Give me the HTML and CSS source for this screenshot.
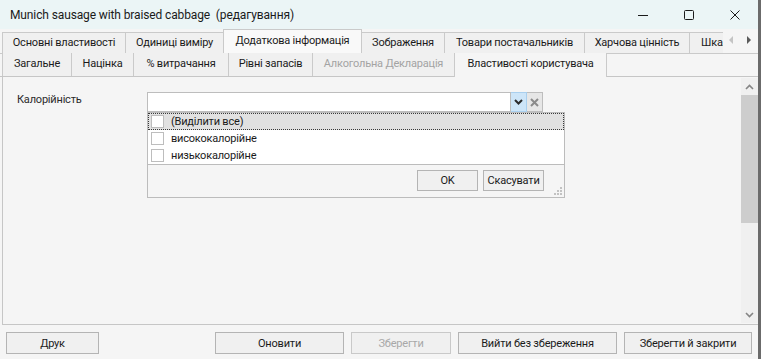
FILE: index.html
```html
<!DOCTYPE html>
<html lang="uk">
<head>
    <meta charset="UTF-8">
    <meta name="viewport" content="width=device-width, initial-scale=1.0">
    <title>Munich sausage with braised cabbage (редагування)</title>
    <link rel="stylesheet" href="styles.css">
</head>
<body>
    <div class="window">
        <div class="titlebar">
            <span class="title">Munich sausage with braised cabbage&nbsp; (редагування)</span>
            <div class="win-controls">
                <span class="ctl">
                    <svg width="10" height="10" viewBox="0 0 10 10"><path d="M0 5.5h10" stroke="#1a1a1a" stroke-width="1"/></svg>
                </span>
                <span class="ctl">
                    <svg width="10" height="10" viewBox="0 0 10 10"><rect x="0.5" y="0.5" width="9" height="9" rx="1" fill="none" stroke="#1a1a1a" stroke-width="1"/></svg>
                </span>
                <span class="ctl">
                    <svg width="10" height="10" viewBox="0 0 10 10"><path d="M0.5 0.5l9 9M9.5 0.5l-9 9" stroke="#1a1a1a" stroke-width="1"/></svg>
                </span>
            </div>
        </div>

        <div class="tabs tabs-main">
            <div class="tab-list">
                <div class="tab t-main">Основні властивості</div>
                <div class="tab t-units">Одиниці виміру</div>
                <div class="tab t-extra active">Додаткова інформація</div>
                <div class="tab t-images">Зображення</div>
                <div class="tab t-suppliers">Товари постачальників</div>
                <div class="tab t-nutrition">Харчова цінність</div>
                <div class="tab t-scale">Шкала</div>
            </div>
            <div class="tab-scroll">
                <svg width="5" height="8" viewBox="0 0 5 8"><path d="M4 0v8L0 4z" fill="#c4c4c4"/></svg>
                <svg width="5" height="8" viewBox="0 0 5 8"><path d="M1 0v8l4-4z" fill="#5a5a5a"/></svg>
            </div>
        </div>

        <div class="tabs tabs-sub">
            <div class="tab t-general">Загальне</div>
            <div class="tab t-markup">Націнка</div>
            <div class="tab t-waste">% витрачання</div>
            <div class="tab t-stock">Рівні запасів</div>
            <div class="tab t-alcohol disabled">Алкогольна Декларація</div>
            <div class="tab t-user active">Властивості користувача</div>
        </div>

        <div class="panel">
            <div class="form">
                <div class="field">
                    <label class="field-label">Калорійність</label>
                    <div class="combo">
                        <div class="combo-input"></div>
                        <div class="combo-btn drop">
                            <svg width="9" height="6" viewBox="0 0 9 6"><path d="M1 1l3.5 3.5L8 1" fill="none" stroke="#2b2b2b" stroke-width="2"/></svg>
                        </div>
                        <div class="combo-btn clear">
                            <svg width="9" height="9" viewBox="0 0 9 9"><path d="M1 1l7 7M8 1L1 8" stroke="#8a8a8a" stroke-width="2"/></svg>
                        </div>

                        <div class="popup">
                            <div class="popup-list">
                                <div class="popup-item focused"><span class="check"></span>(Виділити все)</div>
                                <div class="popup-item"><span class="check"></span>висококалорійне</div>
                                <div class="popup-item"><span class="check"></span>низькокалорійне</div>
                            </div>
                            <div class="popup-footer">
                                <button class="btn popup-btn">OK</button>
                                <button class="btn popup-btn">Скасувати</button>
                                <svg class="grip" width="8" height="8" viewBox="0 0 8 8">
                                    <rect x="6" y="0" width="2" height="2" fill="#c2c2c2"/>
                                    <rect x="3" y="3" width="2" height="2" fill="#c2c2c2"/>
                                    <rect x="6" y="3" width="2" height="2" fill="#c2c2c2"/>
                                    <rect x="0" y="6" width="2" height="2" fill="#c2c2c2"/>
                                    <rect x="3" y="6" width="2" height="2" fill="#c2c2c2"/>
                                    <rect x="6" y="6" width="2" height="2" fill="#c2c2c2"/>
                                </svg>
                            </div>
                        </div>
                    </div>
                </div>
            </div>

            <div class="scrollbar">
                <div class="sb-arrow">
                    <svg width="9" height="6" viewBox="0 0 9 6"><path d="M1 5l3.5-3.5L8 5" fill="none" stroke="#858585" stroke-width="1.6"/></svg>
                </div>
                <div class="sb-track">
                    <div class="sb-thumb"></div>
                </div>
                <div class="sb-arrow">
                    <svg width="9" height="6" viewBox="0 0 9 6"><path d="M1 1l3.5 3.5L8 1" fill="none" stroke="#858585" stroke-width="1.6"/></svg>
                </div>
            </div>
        </div>

        <div class="footer">
            <button class="btn btn-print">Друк</button>
            <div class="spacer"></div>
            <button class="btn btn-refresh">Оновити</button>
            <button class="btn btn-save" disabled>Зберегти</button>
            <button class="btn btn-exit">Вийти без збереження</button>
            <button class="btn btn-save-close">Зберегти й закрити</button>
        </div>
    </div>
</body>
</html>
```

FILE: styles.css
```css
* {
    box-sizing: border-box;
}

html, body {
    margin: 0;
    height: 100%;
}

body {
    background-color: #6b6b6b;
    font-family: Roboto, "Noto Sans", sans-serif;
    font-size: 11px;
    letter-spacing: -0.2px;
    color: #1b1b1b;
}

.window {
    width: 758px;
    height: 359px;
    background-color: #f5f5f5;
    display: flex;
    flex-direction: column;
}

/* title bar */

.titlebar {
    height: 29px;
    flex: none;
    display: flex;
    align-items: center;
    background-color: #ebf5f6;
    padding-left: 10px;
}

.title {
    flex: 1;
    font-size: 12px;
    letter-spacing: -0.12px;
    white-space: nowrap;
    color: #1a1a1a;
}

.win-controls {
    display: flex;
    height: 100%;
}

.ctl {
    width: 46px;
    display: flex;
    align-items: center;
    justify-content: center;
}

/* tab strips */

.tabs {
    height: 24px;
    flex: none;
    display: flex;
    align-items: flex-end;
    padding-left: 2px;
}

.tab-list {
    flex: 1;
    display: flex;
    align-items: flex-end;
    overflow: hidden;
    height: 100%;
}

.tab {
    flex: none;
    height: 21px;
    line-height: 20px;
    text-align: center;
    border: 1px solid #cacaca;
    border-bottom: none;
    margin-right: -1px;
    background-color: #f0f0f0;
    white-space: nowrap;
    overflow: hidden;
}

.tab.active {
    height: 24px;
    line-height: 21px;
    background-color: #f9f9f9;
}

.tab.disabled {
    color: #a3a3a3;
}

.t-main { width: 124px; }
.t-units { width: 99px; }
.t-extra { width: 139px; }
.t-images { width: 84px; }
.t-suppliers { width: 141px; }
.t-nutrition { width: 106px; }
.t-scale { width: 60px; text-align: left; padding-left: 11px; }

.t-general { width: 70px; }
.t-markup { width: 63px; }
.t-waste { width: 96px; }
.t-stock { width: 85px; }
.t-alcohol { width: 143px; }
.t-user { width: 153px; }

.tab-scroll {
    width: 35px;
    height: 100%;
    flex: none;
    display: flex;
    align-items: center;
    justify-content: space-between;
    padding: 0 7px 2px 6px;
    background-color: #f5f5f5;
}

.tabs-sub {
    border-bottom: 1px solid #c6c6c6;
    border-top: 1px solid #cacaca;
}

.tabs-sub .tab {
    height: 23px;
    line-height: 22px;
    border-top: none;
}

.tabs-sub .tab.active {
    height: 24px;
    margin-bottom: -1px;
    line-height: 21px;
    background-color: #f5f5f5;
}

/* main panel */

.panel {
    flex: 1;
    display: flex;
    margin-left: 2px;
    border-left: 1px solid #c6c6c6;
    border-bottom: 1px solid #c6c6c6;
}

.form {
    flex: 1;
    padding: 15px 0 0 14px;
}

.field {
    display: flex;
    align-items: flex-start;
}

.field-label {
    width: 130px;
    line-height: 16px;
    color: #2a2a2a;
}

.combo {
    position: relative;
    display: flex;
    height: 20px;
}

.combo-input {
    width: 364px;
    height: 20px;
    background-color: #fff;
    border: 1px solid #bdbdbd;
}

.combo-btn {
    width: 16px;
    height: 20px;
    display: flex;
    align-items: center;
    justify-content: center;
    border: 1px solid #bdbdbd;
    border-left: none;
}

.combo-btn.drop {
    background-color: #cde5f8;
    border-color: #a9cfee;
}

.combo-btn.clear {
    background-color: #e6e6e6;
}

/* dropdown popup */

.popup {
    position: absolute;
    left: 0;
    top: 20px;
    width: 418px;
    height: 86px;
    background-color: #f5f5f5;
    border: 1px solid #bcbcbc;
    display: flex;
    flex-direction: column;
}

.popup-list {
    background-color: #fff;
    border-bottom: 1px solid #bcbcbc;
    height: 52px;
}

.popup-item {
    height: 17px;
    display: flex;
    align-items: center;
    padding-left: 3px;
    line-height: 16px;
}

.popup-item.focused {
    background-color: #e1e1e1;
    outline: 1px dotted #3a3a3a;
    outline-offset: -1px;
}

.check {
    width: 13px;
    height: 13px;
    background-color: #fff;
    border: 1px solid #bdbdbd;
    margin-right: 7px;
}

.popup-footer {
    flex: 1;
    display: flex;
    justify-content: flex-end;
    align-items: flex-start;
    gap: 5px;
    padding: 5px 20px 0 0;
    position: relative;
}

.grip {
    position: absolute;
    right: 2px;
    bottom: 2px;
}

/* buttons */

.btn {
    font-family: inherit;
    font-size: 11px;
    letter-spacing: -0.2px;
    color: #1b1b1b;
    height: 22px;
    padding: 0;
    background-color: #f0f0f0;
    border: 1px solid #b4b4b4;
    border-radius: 0;
}

.btn:disabled {
    color: #a8a8a8;
    border-color: #c9c9c9;
}

.popup-btn {
    width: 61px;
    height: 21px;
}

/* scrollbar */

.scrollbar {
    width: 17px;
    flex: none;
    display: flex;
    flex-direction: column;
    background-color: #f0f0f0;
    margin: 1px 0 1px 0;
}

.sb-arrow {
    height: 17px;
    display: flex;
    align-items: center;
    justify-content: center;
}

.sb-track {
    flex: 1;
}

.sb-thumb {
    height: 128px;
    background-color: #cdcdcd;
}

/* footer */

.footer {
    height: 34px;
    flex: none;
    display: flex;
    align-items: flex-start;
    padding: 7px 6px 0 6px;
    gap: 7px;
}

.spacer {
    flex: 1;
}

.btn-print { width: 93px; }
.btn-refresh { width: 129px; }
.btn-save { width: 100px; }
.btn-exit { width: 159px; }
.btn-save-close { width: 128px; }
```
